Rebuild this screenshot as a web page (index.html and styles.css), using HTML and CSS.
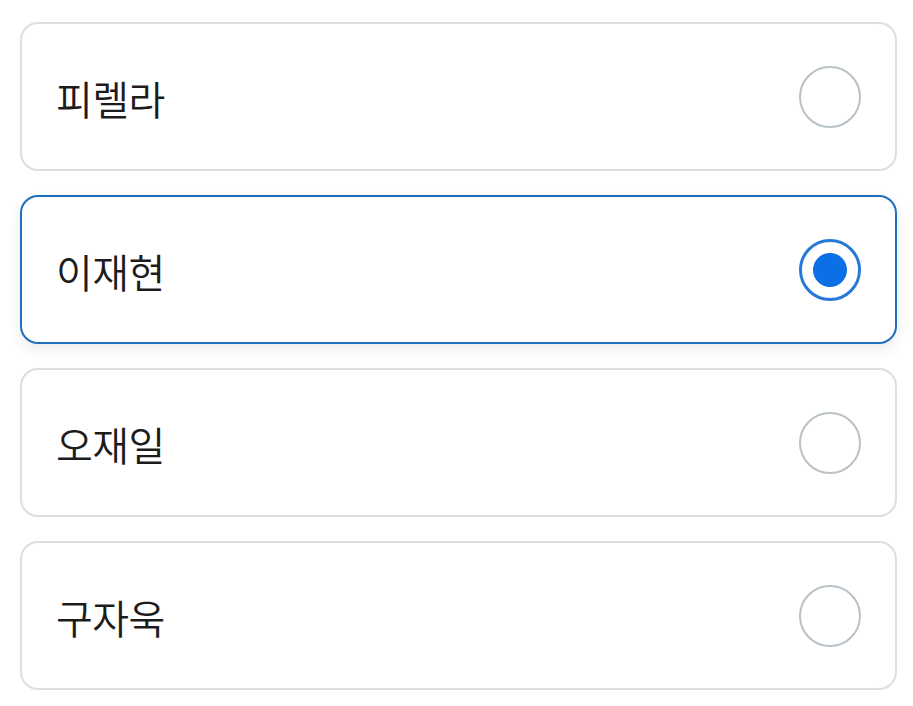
FILE: index.html
```html
<!DOCTYPE html>
<html lang="ko">
<head>
<meta charset="utf-8">
<link rel="stylesheet" href="styles.css">
</head>
<body>
<div class="list">
  <label class="option">
    <span class="name">피렐라</span>
    <span class="radio"></span>
  </label>
  <label class="option selected">
    <span class="name">이재현</span>
    <span class="radio"><span class="dot"></span></span>
  </label>
  <label class="option">
    <span class="name">오재일</span>
    <span class="radio"></span>
  </label>
  <label class="option">
    <span class="name">구자욱</span>
    <span class="radio"></span>
  </label>
</div>
</body>
</html>
```

FILE: styles.css
```css
html, body {
  margin: 0;
  padding: 0;
  background: #ffffff;
}
body {
  font-family: "Noto Sans CJK KR", "Noto Sans", sans-serif;
}
.list {
  display: flex;
  flex-direction: column;
  gap: 24px;
  padding: 22px 16px 0 20px;
}
.option {
  box-sizing: border-box;
  height: 149px;
  border: 2px solid #dcdfe2;
  border-radius: 18px;
  background: #fff;
  display: flex;
  align-items: center;
  justify-content: space-between;
  padding: 0 34px 0 34px;
}
.option.selected {
  border-color: #1f6fbe;
  box-shadow: 0 6px 14px rgba(0, 0, 0, 0.08);
}
.name {
  font-size: 40px;
  font-weight: 350;
  color: #1c1c1c;
  letter-spacing: -0.6px;
  line-height: 1;
  margin-top: 2px;
}
.radio {
  box-sizing: border-box;
  width: 62px;
  height: 62px;
  border: 2px solid #b9c2c7;
  border-radius: 50%;
  display: flex;
  align-items: center;
  justify-content: center;
}
.selected .radio {
  border: 3px solid #2679d6;
}
.dot {
  width: 34px;
  height: 34px;
  border-radius: 50%;
  background: #0b6fe6;
}
```
